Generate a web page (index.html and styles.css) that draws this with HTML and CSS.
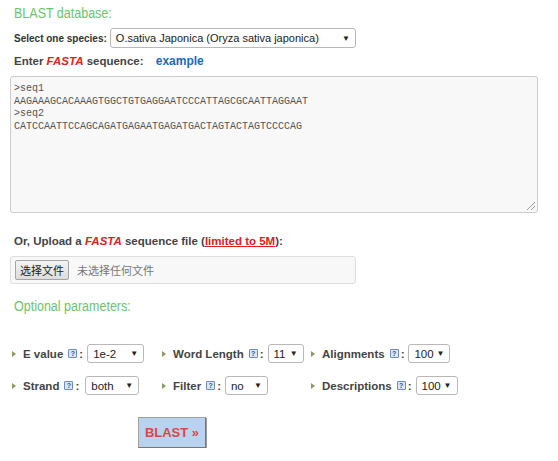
FILE: index.html
```html
<!DOCTYPE html>
<html lang="en">
<head>
  <meta charset="UTF-8" />
  <title>BLAST</title>
  <link rel="stylesheet" href="styles.css">
</head>
<body>
  <form class="blast">
    <h3 class="title">BLAST database:</h3>

    <div class="species-row">
      <span class="species-label">Select one species:</span>
      <span class="select species-select">O.sativa Japonica (Oryza sativa japonica)<i class="arrow">▼</i></span>
    </div>

    <div class="field-label">
      Enter <em>FASTA</em> sequence: <a class="example" href="#">example</a>
    </div>

    <div class="seq-box">
      <pre class="seq-text">&gt;seq1
AAGAAAGCACAAAGTGGCTGTGAGGAATCCCATTAGCGCAATTAGGAAT
&gt;seq2
CATCCAATTCCAGCAGATGAGAATGAGATGACTAGTACTAGTCCCCAG</pre>
      <span class="grip"></span>
    </div>

    <div class="field-label upload-label">
      Or, Upload a <em>FASTA</em> sequence file (<a class="limit" href="#">limited to 5M</a>):
    </div>

    <div class="file-box">
      <span class="file-btn">选择文件</span>
      <span class="file-name">未选择任何文件</span>
    </div>

    <h3 class="title title-opt">Optional parameters:</h3>

    <div class="params">
      <div class="param">
        <span class="bullet"></span><b>E value</b><span class="help">?</span><span class="colon">:</span>
        <span class="select w-ev">1e-2<i class="arrow">▼</i></span>
      </div>
      <div class="param">
        <span class="bullet"></span><b>Word Length</b><span class="help">?</span><span class="colon">:</span>
        <span class="select w-wl">11<i class="arrow">▼</i></span>
      </div>
      <div class="param">
        <span class="bullet"></span><b>Alignments</b><span class="help">?</span><span class="colon">:</span>
        <span class="select w-al">100<i class="arrow">▼</i></span>
      </div>
      <div class="param">
        <span class="bullet"></span><b>Strand</b><span class="help">?</span><span class="colon">:</span>
        <span class="select w-st">both<i class="arrow">▼</i></span>
      </div>
      <div class="param">
        <span class="bullet"></span><b>Filter</b><span class="help">?</span><span class="colon">:</span>
        <span class="select w-fi">no<i class="arrow">▼</i></span>
      </div>
      <div class="param">
        <span class="bullet"></span><b>Descriptions</b><span class="help">?</span><span class="colon">:</span>
        <span class="select w-de">100<i class="arrow">▼</i></span>
      </div>
    </div>

    <button type="button" class="blast-btn">BLAST »</button>
  </form>
</body>
</html>
```

FILE: styles.css
```css
/* ─── Reset & Body ───────────────────────────────────────────────────────── */
* { box-sizing: border-box; margin: 0; padding: 0; }
body {
  background: #fff;
  font-family: "Liberation Sans", Arial, sans-serif;
  color: #333;
}
.blast { padding: 0 10px; }

/* ─── Headings & Labels ──────────────────────────────────────────────────── */
.title {
  margin: 6px 0 0 4px;
  height: 17px;
  line-height: 17px;
  font-size: 12.5px;
  font-weight: normal;
  color: #6cc46c;
  transform-origin: left center;
  transform: scaleY(1.12);
}
.title-opt { margin-top: 15px; }

.species-row {
  display: flex;
  align-items: center;
  gap: 3px;
  height: 20px;
  margin: 5px 0 0 4px;
}
.species-label { font-size: 10px; font-weight: bold; color: #333; }

.field-label {
  height: 16px;
  line-height: 16px;
  margin: 5px 0 0 4px;
  font-size: 11.5px;
  font-weight: bold;
  color: #444;
}
.field-label em { color: #e0201a; }
.example {
  margin-left: 9px;
  color: #1a6ab8;
  font-size: 12px;
  text-decoration: none;
}
.upload-label { margin-top: 20px; }
.limit { color: #e0201a; }

/* ─── Selects ────────────────────────────────────────────────────────────── */
.select {
  display: inline-flex;
  align-items: center;
  justify-content: space-between;
  height: 19px;
  padding: 0 5px 0 5px;
  background: #fff;
  border: 1px solid #b8b8b8;
  border-radius: 3px;
  font-size: 11.5px;
  font-weight: normal;
  color: #222;
}
.arrow { font-style: normal; font-size: 8px; color: #222; }
.species-select { width: 246px; height: 20px; font-size: 11px; }

/* ─── Sequence Box ───────────────────────────────────────────────────────── */
.seq-box {
  position: relative;
  width: 528px;
  height: 137px;
  margin-top: 7px;
  padding: 6px 3px;
  background: #f8f8f8;
  border: 1px solid #ccc;
  border-radius: 3px;
}
.seq-text {
  font-family: "Liberation Mono", monospace;
  font-size: 10px;
  line-height: 12.7px;
  color: #555;
}
.grip {
  position: absolute;
  right: 2px;
  bottom: 2px;
  width: 8px;
  height: 8px;
  background: linear-gradient(135deg, transparent 45%, #999 45%, #999 55%, transparent 55%, transparent 70%, #999 70%, #999 80%, transparent 80%);
}

/* ─── File Input ─────────────────────────────────────────────────────────── */
.file-box {
  display: flex;
  align-items: center;
  gap: 8px;
  width: 346px;
  height: 28px;
  margin-top: 7px;
  padding: 0 4px;
  background: #f8f8f8;
  border: 1px solid #ddd;
  border-radius: 3px;
  font-family: "Noto Sans CJK SC", sans-serif;
  font-size: 11px;
}
.file-btn {
  height: 20px;
  line-height: 18px;
  padding: 0 4px;
  background: linear-gradient(#f4f4f4, #dcdcdc);
  border: 1px solid #a5a5a5;
  border-radius: 2px;
  color: #222;
}
.file-name { color: #777; }

/* ─── Parameters Grid ────────────────────────────────────────────────────── */
.params {
  display: grid;
  grid-template-columns: 150px 149px auto;
  row-gap: 13px;
  margin-top: 28px;
  padding-left: 2px;
}
.param {
  display: flex;
  align-items: center;
  height: 19px;
  font-size: 11.5px;
  color: #444;
}
.bullet {
  width: 0;
  height: 0;
  margin-right: 7px;
  border-top: 3px solid transparent;
  border-bottom: 3px solid transparent;
  border-left: 4px solid #8a9a5e;
}
.help {
  display: inline-block;
  width: 9px;
  height: 9px;
  margin-left: 5px;
  background: #dce7f7;
  border: 1px solid #6a8cc8;
  border-radius: 1px;
  font-size: 7px;
  line-height: 7px;
  font-weight: bold;
  text-align: center;
  color: #34508a;
}
.colon { margin: 0 4px 0 2px; font-weight: bold; }
.w-ev { width: 57px; }
.w-wl { width: 36px; }
.w-al { width: 42px; }
.w-st { width: 54px; margin-left: 2px; }
.w-fi { width: 43px; }
.w-de { width: 42px; }

/* ─── Submit ─────────────────────────────────────────────────────────────── */
.blast-btn {
  display: block;
  width: 68px;
  height: 31px;
  margin: 22px 0 0 128px;
  background: #b9d2ee;
  border: 1px solid #a0a0a0;
  border-right-color: #777;
  border-bottom-color: #777;
  box-shadow: 1px 1px 0 #999;
  font-family: "Liberation Sans", Arial, sans-serif;
  font-size: 13px;
  font-weight: bold;
  color: #d94848;
}
```
